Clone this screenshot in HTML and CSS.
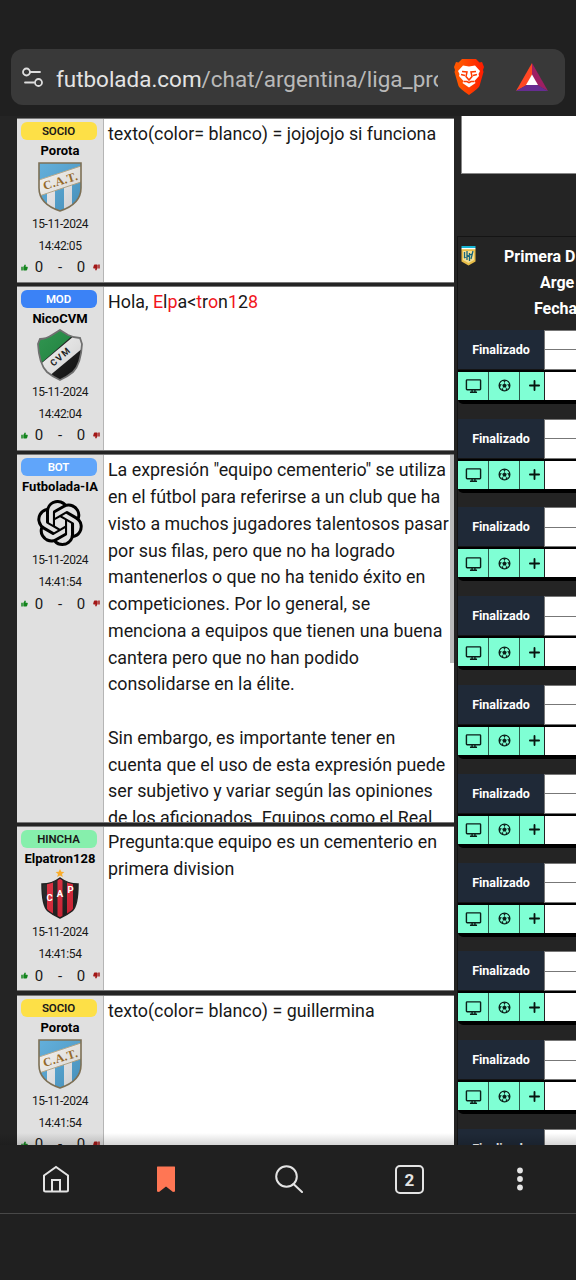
FILE: index.html
```html
<!DOCTYPE html>
<html lang="es">
<head>
<meta charset="utf-8">
<title>Futbolada</title>
<link rel="stylesheet" href="styles.css">
</head>
<body>
<svg class="defs" aria-hidden="true">
  <defs>
    <linearGradient id="lion" x1="0" x2="1" y1="0" y2="0"><stop offset=".2" stop-color="#ff5500"/><stop offset="1" stop-color="#ff1a00"/></linearGradient>
    <linearGradient id="shade" x1="0" x2="1" y1="0" y2="1"><stop offset="0" stop-color="#fff" stop-opacity=".12"/><stop offset="1" stop-color="#000" stop-opacity=".16"/></linearGradient>
    <clipPath id="catClip"><path d="M3 2H45V27C45 39 36 46 24 50C12 46 3 39 3 27Z"/></clipPath>
    <clipPath id="cvmClip"><path d="M24 1L32 6Q38 9 44 9L46 15Q45 35 37 43Q31 48 24 51Q17 48 11 43Q3 35 2 15L4 10Q10 10 16 6Z"/></clipPath>
    <clipPath id="capClip"><path d="M24 9Q32 15 42 15Q42 37 36 42Q31 46 24 49Q17 46 12 42Q6 37 6 15Q16 15 24 9Z"/></clipPath>
    <symbol id="cat" viewBox="0 0 48 52">
      <g clip-path="url(#catClip)">
        <path fill="#4fa6d8" d="M0 0H48V52H0z"/><path fill="#f0f0f2" d="M11 20h8v32h-8zM28 20h8v32h-8z"/>
        <path fill="#f4f2ee" stroke="#b9aa88" d="M0 20L48 4V20L0 36z"/>
        <path fill="url(#shade)" d="M0 0H48V52H0z"/>
      </g>
      <path fill="none" stroke="#7d7055" stroke-width="1.600" d="M3 2H45V27C45 39 36 46 24 50C12 46 3 39 3 27Z"/>
      <text class="crest-serif" x="24.500" y="24" transform="rotate(-17 24 20)">C.A.T.</text>
    </symbol>
    <symbol id="cvm" viewBox="0 0 48 52">
      <g clip-path="url(#cvmClip)">
        <path fill="#111" d="M0 0H48V52H0z"/><path fill="#16883a" d="M0 0H48L36 7L4 35z"/>
        <path fill="#f2f2f2" d="M0 39L38 7L48 8V18L12 48z"/><path fill="url(#shade)" d="M0 0H48V52H0z"/>
      </g>
      <path fill="none" stroke="#707070" stroke-width="1.800" d="M24 1L32 6Q38 9 44 9L46 15Q45 35 37 43Q31 48 24 51Q17 48 11 43Q3 35 2 15L4 10Q10 10 16 6Z"/>
      <text class="crest-cvm" x="25" y="30.500" transform="rotate(-41 25 28)">CVM</text>
    </symbol>
    <symbol id="cap" viewBox="0 0 48 52">
      <path fill="#f9ac2c" d="M24 0l1.300 2.800 3.100.2-2.400 2 .8 3L24 6.400l-2.800 1.600.8-3-2.400-2 3.100-.2z"/>
      <g clip-path="url(#capClip)">
        <path fill="#171717" d="M0 0H48V52H0z"/><path fill="#e01f32" d="M11 10h6v40h-6zM21.500 8h5v44h-5zM31 10h6v40h-6z"/><path fill="url(#shade)" d="M0 0H48V52H0z"/>
      </g>
      <path fill="none" stroke="#222" stroke-width="1.500" d="M24 9Q32 15 42 15Q42 37 36 42Q31 46 24 49Q17 46 12 42Q6 37 6 15Q16 15 24 9Z"/>
      <g class="crest-cap"><text x="13.500" y="32">C</text><text x="24" y="27.500">A</text><text x="34.500" y="24">P</text></g>
    </symbol>
    <symbol id="ia" viewBox="0 0 24 24">
      <path d="M22.2819 9.8211a5.9847 5.9847 0 0 0-.5157-4.9108 6.0462 6.0462 0 0 0-6.5098-2.9A6.0651 6.0651 0 0 0 4.9807 4.1818a5.9847 5.9847 0 0 0-3.9977 2.9 6.0462 6.0462 0 0 0 .7427 7.0966 5.98 5.98 0 0 0 .511 4.9107 6.051 6.051 0 0 0 6.5146 2.9001A5.9847 5.9847 0 0 0 13.2599 24a6.0557 6.0557 0 0 0 5.7718-4.2058 5.9894 5.9894 0 0 0 3.9977-2.9001 6.0557 6.0557 0 0 0-.7475-7.0729zm-9.022 12.6081a4.4755 4.4755 0 0 1-2.8764-1.0408l.1419-.0804 4.7783-2.7582a.7948.7948 0 0 0 .3927-.6813v-6.7369l2.02 1.1686a.071.071 0 0 1 .038.052v5.5826a4.504 4.504 0 0 1-4.4945 4.4944zm-9.6607-4.1254a4.4708 4.4708 0 0 1-.5346-3.0137l.142.0852 4.783 2.7582a.7712.7712 0 0 0 .7806 0l5.8428-3.3685v2.3324a.0804.0804 0 0 1-.0332.0615L9.74 19.9502a4.4992 4.4992 0 0 1-6.1408-1.6464zM2.3408 7.8956a4.485 4.485 0 0 1 2.3655-1.9728V11.6a.7664.7664 0 0 0 .3879.6765l5.8144 3.3543-2.0201 1.1685a.0757.0757 0 0 1-.071 0l-4.8303-2.7865A4.504 4.504 0 0 1 2.3408 7.872zm16.5963 3.8558L13.1038 8.364 15.1192 7.2a.0757.0757 0 0 1 .071 0l4.8303 2.7913a4.4944 4.4944 0 0 1-.6765 8.1042v-5.6772a.79.79 0 0 0-.407-.667zm2.0107-3.0231l-.142-.0852-4.7735-2.7818a.7759.7759 0 0 0-.7854 0L9.409 9.2297V6.8974a.0662.0662 0 0 1 .0284-.0615l4.8303-2.7866a4.4992 4.4992 0 0 1 6.6802 4.66zM8.3065 12.863l-2.02-1.1638a.0804.0804 0 0 1-.038-.0567V6.0742a4.4992 4.4992 0 0 1 7.3757-3.4537l-.142.0805L8.704 5.459a.7948.7948 0 0 0-.3927.6813zm1.0976-2.3654l2.602-1.4998 2.6069 1.4998v2.9994l-2.5974 1.4997-2.6067-1.4997Z"/>
    </symbol>
    <symbol id="thumb" viewBox="0 0 24 24"><path d="M1 9h5v13H1zM8 21V10L13 1.500Q17 1.500 16.500 5L15.500 9H21Q23.500 9 23.300 12L21 20Q20.500 22 18 22H10Z"/></symbol>
    <symbol id="tv" viewBox="0 0 24 24"><path fill="none" stroke="#0b1f19" stroke-width="2" d="M3 4h18a1 1 0 0 1 1 1v12a1 1 0 0 1-1 1H3a1 1 0 0 1-1-1V5a1 1 0 0 1 1-1zM7 21.500h10M10 18v3M14 18v3"/></symbol>
    <symbol id="ball" viewBox="0 0 24 24"><circle cx="12" cy="12" r="10" fill="none" stroke="#0b1f19" stroke-width="2.200"/><path fill="#0b1f19" d="M12 8l4 3-1.500 4.600h-5L8 11zM8 2.500h8L12 6zM2 9l3.500.5L5 14l-3 1zM22 9l-3.500.5L19 14l3 1zM6 17.500l4 .5-1 4zM18 17.500l-4 .5 1 4z"/><path stroke="#0b1f19" d="M12 8V5M8 11l-3-1M16 11l3-1M9.500 15.600l-2 3M14.500 15.600l2 3"/></symbol>
    <symbol id="plus" viewBox="0 0 24 24"><path fill="none" stroke="#07150f" stroke-width="4" stroke-linecap="round" d="M12 2v20M2 12h20"/></symbol>
  </defs>
</svg>

<header class="browser-bar">
  <div class="address">
    <svg class="tune" viewBox="0 0 22 20"><path d="M8 5H18M3 15.500H12"/><circle cx="4.500" cy="5" r="3.500"/><circle cx="16.500" cy="15.500" r="3.500"/></svg>
    <div class="url"><span class="host">futbolada.com</span>/chat/argentina/liga_pro</div>
    <svg class="lion" viewBox="0 0 30 36"><path fill="url(#lion)" d="M8 0h14l3.500 3.500 2.500-.5 2 5-1 3 .5 2-4 14Q25 29 15 36Q5 29 4.500 27L.5 13 1 11 0 8l2-5 2.500.5z"/><path fill="#fff" d="M9 6.500l6 1 6-1 5 5.500-1.500 3 .5 2-4.500 5 1 2-6.500 4.500L8.500 24l1-2L5 17l.5-2L4 12z"/><path fill="none" stroke="#ff3b00" stroke-width="1.500" d="M8 12.500l5 .5-1 4.500L15 21l3-3.500-1-4.500 5-.5M7 15.500l4 1M23 15.500l-4 1M9.500 22.500H13l2 1.200 2-1.200h3.500"/></svg>
    <svg class="bat" viewBox="0 0 32 28"><path fill="#ff4724" d="M16 0L0 28l11-6 5-10z"/><path fill="#9e1f63" d="M16 0l16 28-11-6-5-10z"/><path fill="#662d91" d="M0 28h32l-10.500-6h-11z"/><path fill="#fff" d="M16 11.500L22 22H10z"/></svg>
  </div>
</header>

<main class="page">
  <section class="chat">
    <article class="message">
      <aside class="author"><span class="badge socio">SOCIO</span><b class="name">Porota</b><svg class="crest"><use href="#cat"/></svg><span class="date">15-11-2024</span><span class="time">14:42:05</span><div class="votes"><svg class="up"><use href="#thumb"/></svg><span>0</span><span>-</span><span>0</span><svg class="down"><use href="#thumb"/></svg></div></aside>
      <div class="body">texto(color= blanco) = jojojojo si funciona</div>
    </article>
    <article class="message">
      <aside class="author"><span class="badge mod">MOD</span><b class="name">NicoCVM</b><svg class="crest"><use href="#cvm"/></svg><span class="date">15-11-2024</span><span class="time">14:42:04</span><div class="votes"><svg class="up"><use href="#thumb"/></svg><span>0</span><span>-</span><span>0</span><svg class="down"><use href="#thumb"/></svg></div></aside>
      <div class="body">Hola, <i>E</i>l<i>p</i>a&lt;<i>t</i>r<i>o</i>n<i>1</i>2<i>8</i></div>
    </article>
    <article class="message long">
      <aside class="author"><span class="badge bot">BOT</span><b class="name">Futbolada-IA</b><svg class="crest ia"><use href="#ia"/></svg><span class="date">15-11-2024</span><span class="time">14:41:54</span><div class="votes"><svg class="up"><use href="#thumb"/></svg><span>0</span><span>-</span><span>0</span><svg class="down"><use href="#thumb"/></svg></div></aside>
      <div class="body">La expresión "equipo cementerio" se utiliza<br>en el fútbol para referirse a un club que ha<br>visto a muchos jugadores talentosos pasar<br>por sus filas, pero que no ha logrado<br>mantenerlos o que no ha tenido éxito en<br>competiciones. Por lo general, se<br>menciona a equipos que tienen una buena<br>cantera pero que no han podido<br>consolidarse en la élite.<br><br>Sin embargo, es importante tener en<br>cuenta que el uso de esta expresión puede<br>ser subjetivo y variar según las opiniones<br>de los aficionados. Equipos como el Real</div>
      <div class="scroll-thumb"></div>
    </article>
    <article class="message">
      <aside class="author"><span class="badge hincha">HINCHA</span><b class="name">Elpatron128</b><svg class="crest"><use href="#cap"/></svg><span class="date">15-11-2024</span><span class="time">14:41:54</span><div class="votes"><svg class="up"><use href="#thumb"/></svg><span>0</span><span>-</span><span>0</span><svg class="down"><use href="#thumb"/></svg></div></aside>
      <div class="body">Pregunta:que equipo es un cementerio en<br>primera division</div>
    </article>
    <article class="message">
      <aside class="author"><span class="badge socio">SOCIO</span><b class="name">Porota</b><svg class="crest"><use href="#cat"/></svg><span class="date">15-11-2024</span><span class="time">14:41:54</span><div class="votes"><svg class="up"><use href="#thumb"/></svg><span>0</span><span>-</span><span>0</span><svg class="down"><use href="#thumb"/></svg></div></aside>
      <div class="body">texto(color= blanco) = guillermina</div>
    </article>
  </section>

  <section class="side">
    <div class="ad"></div>
    <div class="league">
      <div class="league-head">
        <svg class="league-logo" viewBox="0 0 15 20"><path fill="#e8bd48" d="M.5 3h14v12.500L7.500 19.500.5 15.500z"/><path fill="#f6df92" d="M2 5h11v9l-5.500 3L2 14z"/><path fill="#18b5d4" d="M.5 0h14v2H.5z"/><path fill="#fff" d="M.5 2h14v1.200H.5z"/><path fill="none" stroke="#17667c" stroke-width="1.300" d="M3.500 6v6M6 5v9M8.500 7v8M12 5l-2 8M3 12l8-4"/></svg>
        <div class="league-title"><span>Primera D</span><span class="l2">Arge</span><span class="l3">Fecha</span></div>
      </div>
      <div class="matches" id="matches"></div>
    </div>
  </section>
  <div class="fade"></div>
</main>

<nav class="bottom-bar">
  <svg viewBox="0 0 28 28"><path d="M2 10.500L14 2l12 8.500V25q0 1.500-1.500 1.500h-21Q2 26.500 2 25zM10 26V15h8v11"/></svg>
  <svg viewBox="0 0 28 28"><path class="mark" d="M5.500 1.500h17q.5 0 .5.500v24.500l-2 .500-7-5.500-7 5.500-2-.500V2q0-.5.500-.5z"/></svg>
  <svg viewBox="0 0 28 28"><circle cx="11.500" cy="11.500" r="10.300"/><path d="M18.500 19l8.500 8"/></svg>
  <div class="tabs">2</div>
  <svg viewBox="0 0 28 28"><g class="dots"><circle cx="14" cy="5.500" r="2.900"/><circle cx="14" cy="14" r="2.900"/><circle cx="14" cy="22.500" r="2.900"/></g></svg>
</nav>
<script src="matches.js"></script>
</body>
</html>
```
FILE: styles.css
```css
* { box-sizing: border-box; }
body { margin: 0; width: 576px; height: 1280px; overflow: hidden; background: #202020; font-family: Roboto, sans-serif; color: #181818; }
.defs { position: absolute; width: 0; height: 0; }

.browser-bar { height: 116px; padding: 49px 11px 0; background: #202020; }
.address { height: 56px; border-radius: 12px; background: #393939; display: flex; align-items: center; padding-left: 11px; }
.tune { width: 22px; height: 20px; fill: none; stroke: #dedede; stroke-width: 1.800; stroke-linecap: round; }
.url { width: 382px; margin-left: 12px; padding-top: 3px; overflow: hidden; white-space: nowrap; font-size: 22.450px; line-height: 34px; color: #b9b9b9; }
.host { color: #e4e4e4; }
.lion { width: 30px; height: 36px; margin-left: 16px; }
.bat { width: 32px; height: 28px; margin-left: 32px; }

.page { position: relative; height: 1029px; overflow: hidden; background: #242424; display: flex; }
.fade { position: absolute; left: 0; right: 0; bottom: 0; height: 12px; background: linear-gradient(rgba(0,0,0,0), rgba(0,0,0,.16)); }

.chat { width: 437px; margin-left: 17px; padding-top: 1.600px; flex: none; display: flex; flex-direction: column; gap: 3.400px; }
.message { height: 165px; flex: none; display: flex; position: relative; overflow: hidden; background: #fff; border-top: 1px solid #777; border-bottom: 1px solid #777; }
.message.long { height: 368.700px; }
.author { width: 87px; flex: none; background: #e0e0e0; border-right: 1px solid #b5b5b5; display: flex; flex-direction: column; align-items: center; padding-top: 3px; font-size: 12px; white-space: nowrap; }
.badge { width: 76px; height: 18px; margin-right: 3px; border-radius: 6px; font-size: 11.500px; line-height: 18px; font-weight: 600; text-align: center; flex: none; letter-spacing: -.1px; }
.socio { background: #fde047; }
.mod { background: #3b82f6; color: #fff; }
.bot { background: #60a5fa; color: #fff; }
.hincha { background: #86efac; }
.name { margin-top: 2px; height: 18px; line-height: 17px; font-size: 13px; color: #000; font-weight: 700; }
.crest { width: 48px; height: 52px; margin-top: 1px; flex: none; }
.crest.ia { width: 46px; height: 46px; margin: 4px 0 3px; }
.date { height: 22px; line-height: 22px; letter-spacing: -.45px; }
.time { height: 22px; line-height: 22px; letter-spacing: -.4px; }
.votes { width: 79px; height: 21px; line-height: 20px; font-size: 15px; display: grid; grid-template-columns: 7px 23px 19px 23px 7px; place-items: center; }
.votes svg { width: 7px; height: 7px; }
.up { fill: #11841b; }
.down { fill: #a31717; transform: rotate(180deg); }
.body { padding: 2px 0 0 4px; font-size: 17.850px; line-height: 26.750px; white-space: nowrap; }
.body i { font-style: normal; color: #f2161c; }
.scroll-thumb { position: absolute; right: 0; top: 0; width: 4px; height: 208px; background: #bbb; }

.crest-serif { font: bold 12px "Liberation Serif", serif; fill: #94692a; text-anchor: middle; letter-spacing: .4px; }
.crest-cvm { font: bold 9px Roboto, sans-serif; fill: #222; text-anchor: middle; letter-spacing: 1.500px; }
.crest-cap { font: bold 9.500px Roboto, sans-serif; fill: #fff; text-anchor: middle; }

.side { flex: 1; margin-left: 3px; overflow: hidden; }
.ad { height: 58px; margin-left: 4px; background: #fff; border: solid #888; border-width: 0 0 1px 1px; }
.league { margin-top: 62px; border: solid #141414; border-width: 1px 0 0 1px; }
.league-head { height: 92.800px; padding: 9px 0 0 3px; display: flex; align-items: flex-start; }
.league-logo { width: 15px; height: 20px; flex: none; }
.league-title { margin: -2.500px 0 0 28px; display: flex; flex-direction: column; color: #fff; font-size: 16px; font-weight: 700; line-height: 26.400px; white-space: nowrap; }
.l2 { padding-left: 36px; }
.l3 { padding-left: 30px; }
.matches { display: flex; flex-direction: column; gap: 14.800px; }
.match { height: 74px; flex: none; background: #000; border-radius: 0 0 0 5px; padding-bottom: 4px; }
.status-row { height: 40px; display: flex; }
.status { width: 86px; flex: none; background: #1f2937; color: #fff; font-size: 12.500px; font-weight: 700; line-height: 40px; text-align: center; border-bottom: 1px solid #141414; }
.teams { flex: 1; display: grid; grid-template-rows: 1fr 1fr; gap: 1px; padding: 1px 0 1px 1px; background: #777; }
.teams span { background: #fff; }
.actions { height: 28px; margin-top: 2px; display: flex; background: #fff; }
.action { width: 31px; height: 28px; flex: none; display: grid; place-items: center; background: #7fffd4; border-right: 1px solid #2b5a4a; }
.action:nth-child(3) { width: 25px; padding-left: 5px; border-color: #222; }
.tv { width: 17px; height: 17px; }
.ball { width: 13px; height: 13px; }
.plus { width: 11px; height: 11px; }

.bottom-bar { height: 69px; display: flex; align-items: center; padding-left: 42px; border-bottom: 1px solid #484848; background: #202020; }
.bottom-bar svg { width: 28px; height: 28px; fill: none; stroke: #e4e4e4; stroke-width: 2; flex: none; }
.bottom-bar svg:nth-child(2) { margin-left: 82px; }
.bottom-bar svg:nth-child(3) { margin-left: 95px; stroke-linecap: round; }
.bottom-bar svg:nth-child(5) { margin-left: 82px; }
.bottom-bar .mark { fill: #ff7654; stroke: none; }
.bottom-bar .dots { fill: #e4e4e4; stroke: none; }
.tabs { width: 29px; height: 29px; margin-left: 92px; border: 2px solid #e4e4e4; border-radius: 5px; color: #e4e4e4; font-size: 17px; font-weight: 700; line-height: 26px; text-align: center; }
```
FILE: matches.js
```js
const actions = ["tv", "ball", "plus"]
  .map(name => `<span class="action"><svg class="${name}"><use href="#${name}"/></svg></span>`)
  .join("");
const card = `<div class="match"><div class="status-row"><div class="status">Finalizado</div><div class="teams"><span></span><span></span></div></div><div class="actions">${actions}</div></div>`;
document.getElementById("matches").innerHTML = card.repeat(10);
```
